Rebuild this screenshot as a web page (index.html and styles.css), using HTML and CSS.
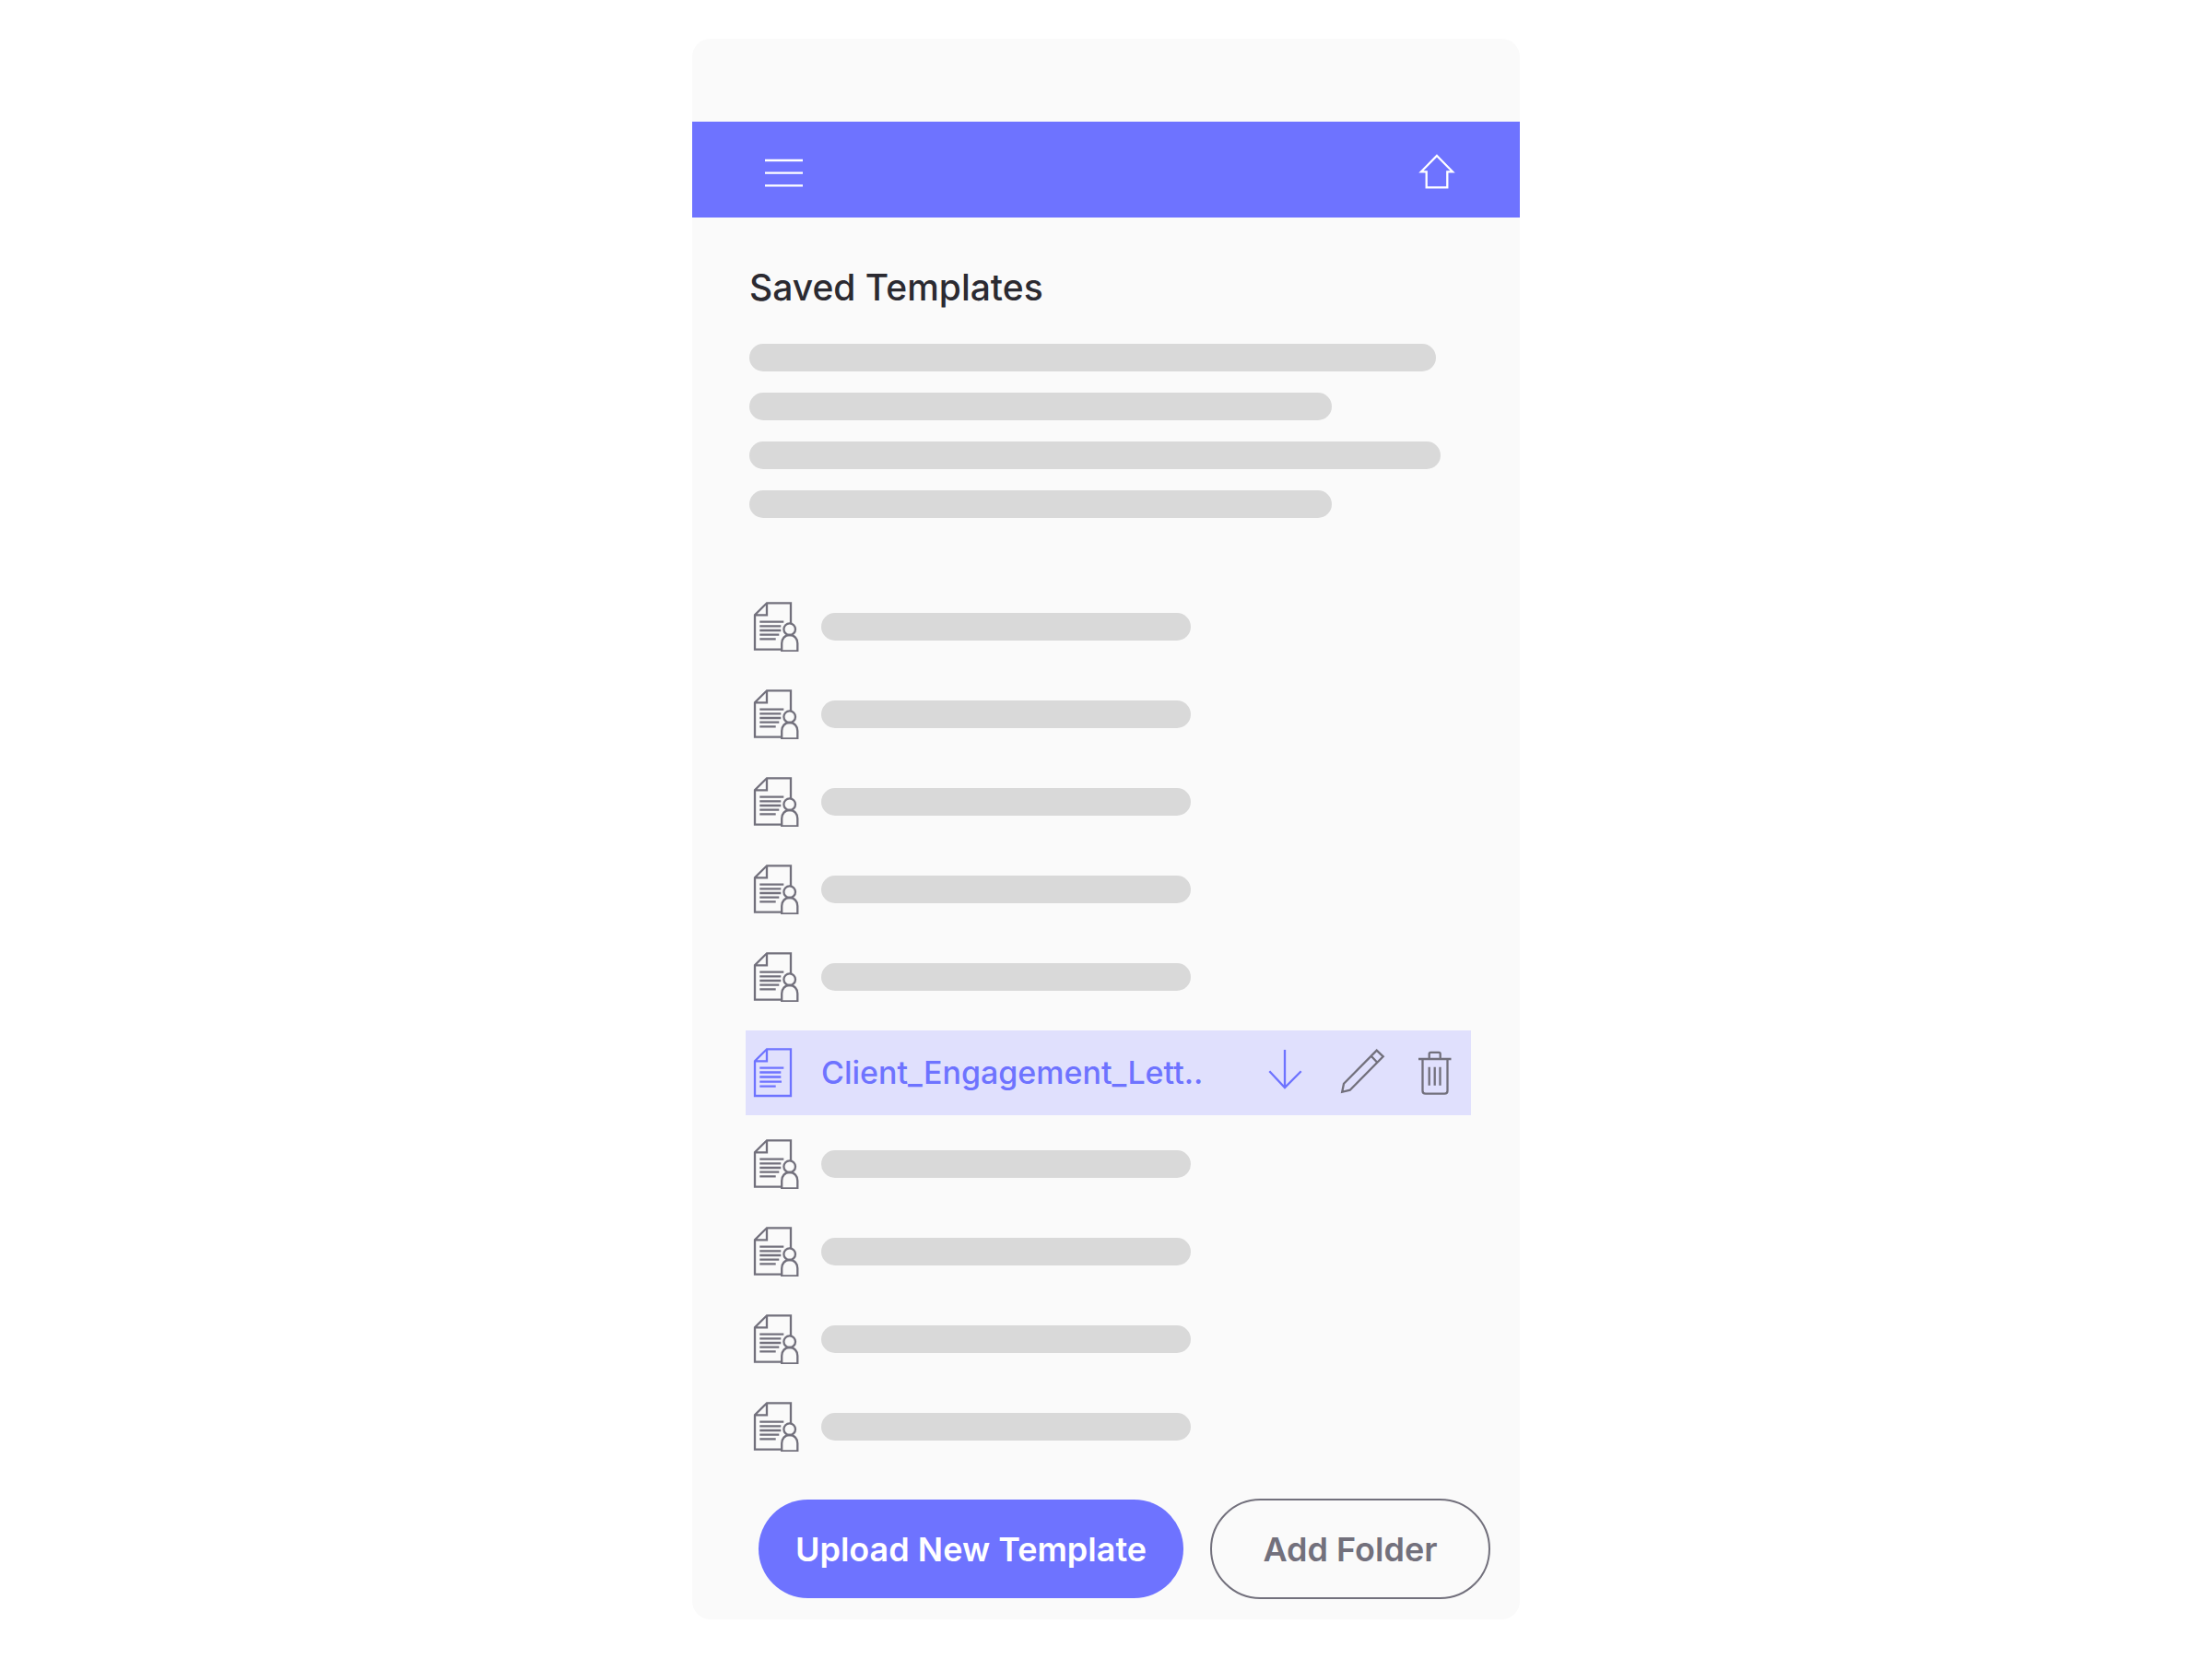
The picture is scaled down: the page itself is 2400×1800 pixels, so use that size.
FILE: index.html
```html
<!DOCTYPE html>
<html lang="en">
<head>
<meta charset="utf-8">
<meta name="viewport" content="width=device-width, initial-scale=1">
<title>Saved Templates</title>
<link rel="stylesheet" href="styles.css">
</head>
<body>
<svg class="sprite" aria-hidden="true">
  <symbol id="shared-doc" viewBox="0 0 50 54">
    <path d="M31 51.7H2V14.3L15 1.3H41V23M15 1.3V14.3H2"/>
    <path d="M7.3 21.7H33.3M7.3 26.3H30.3M7.3 31H30.3M7.3 35.7H28.3M7.3 40.3H24.7"/>
    <circle cx="39.7" cy="29.7" r="6.3"/>
    <path d="M31.2 53.3V45C31.2 40 34.5 36 39.7 36S48.3 40 48.3 45V53.3Z"/>
  </symbol>
</svg>
<main class="screen">
  <header class="topbar">
    <button class="icon-button" type="button" aria-label="Menu">
      <svg width="41" height="34" viewBox="0 0 41 34"><path d="M0 5H41M0 18.7H41M0 32.3H41"/></svg>
    </button>
    <a class="icon-button" href="#" aria-label="Home">
      <svg width="38" height="38" viewBox="0 0 38 38"><path d="M19 2L36 19.3H30.3V36.3H7.7V19.3H2Z"/></svg>
    </a>
  </header>
  <div class="content">
    <h1 class="title">Saved Templates</h1>
    <div class="intro">
      <span class="bar bar-long"></span>
      <span class="bar bar-short"></span>
      <span class="bar bar-longest"></span>
      <span class="bar bar-short"></span>
    </div>
    <ul class="files">
      <li class="file"><svg class="doc"><use href="#shared-doc"/></svg><span class="bar bar-name"></span></li>
      <li class="file"><svg class="doc"><use href="#shared-doc"/></svg><span class="bar bar-name"></span></li>
      <li class="file"><svg class="doc"><use href="#shared-doc"/></svg><span class="bar bar-name"></span></li>
      <li class="file"><svg class="doc"><use href="#shared-doc"/></svg><span class="bar bar-name"></span></li>
      <li class="file"><svg class="doc"><use href="#shared-doc"/></svg><span class="bar bar-name"></span></li>
      <li class="file file-selected">
        <svg class="doc doc-selected" viewBox="0 0 50 54">
          <path d="M2 14.3L15 1.3H41V52H2ZM15 1.3V14.3H2"/>
          <path d="M7.3 21.7H33.3M7.3 26.5H30.3M7.3 31.5H30.3M7.3 36.7H31M7.3 41.7H24.7"/>
        </svg>
        <span class="file-name">Client_Engagement_Lett..</span>
        <div class="actions">
          <button class="icon-button action-download" type="button" aria-label="Download">
            <svg width="44" height="48" viewBox="0 0 44 48"><path d="M18 -1V40M1.3 22.2L18 40L35.7 22.2"/></svg>
          </button>
          <button class="icon-button" type="button" aria-label="Edit">
            <svg width="48" height="48" viewBox="0 2 48 48"><path d="M1.2 46.8L3 37.7L38.7 1.7L45.7 8.3L9.7 44.7ZM32.7 7.7L39.3 14.7"/></svg>
          </button>
          <button class="icon-button" type="button" aria-label="Delete">
            <svg width="38" height="48" viewBox="0 0 38 48"><path d="M1 9H36.5M12.7 9V3.5Q12.7 1.8 14.4 1.8H23Q24.7 1.8 24.7 3.5V9M5.5 9V43.5Q5.5 46.7 8.7 46.7H29.3Q32.5 46.7 32.5 43.5V9M12.7 17.7V37.7M18.7 17.7V37.7M24.5 17.7V37.7"/></svg>
          </button>
        </div>
      </li>
      <li class="file"><svg class="doc"><use href="#shared-doc"/></svg><span class="bar bar-name"></span></li>
      <li class="file"><svg class="doc"><use href="#shared-doc"/></svg><span class="bar bar-name"></span></li>
      <li class="file"><svg class="doc"><use href="#shared-doc"/></svg><span class="bar bar-name"></span></li>
      <li class="file"><svg class="doc"><use href="#shared-doc"/></svg><span class="bar bar-name"></span></li>
    </ul>
  </div>
  <footer class="footer">
    <button class="button button-primary" type="button">Upload New Template</button>
    <button class="button button-outline" type="button">Add Folder</button>
  </footer>
</main>
</body>
</html>
```

FILE: styles.css
```css
:root {
  --accent: #6e73ff;
  --accent-soft: #e0e0fd;
  --surface: #fafafa;
  --placeholder: #d9d9d9;
  --muted: #72707c;
  --text: #2b2a31;
}

* { box-sizing: border-box; }

body {
  margin: 0;
  padding: 42px 0;
  background: #fff;
  color: var(--text);
  font-family: Inter, "Liberation Sans", sans-serif;
}

svg {
  display: block;
  flex: none;
  fill: none;
  stroke: currentColor;
  stroke-width: 2.3;
  overflow: visible;
}

.sprite { position: absolute; width: 0; height: 0; }

.screen {
  width: 100%;
  max-width: 898px;
  margin: 0 auto;
  padding: 90px 0 22px;
  border-radius: 20px;
  background: var(--surface);
}

.topbar {
  display: flex;
  align-items: center;
  justify-content: space-between;
  height: 104px;
  padding: 4px 71px 0 79px;
  background: var(--accent);
  color: #fff;
}

.icon-button {
  padding: 0;
  border: 0;
  background: none;
  color: inherit;
  cursor: pointer;
}

.content { padding: 52px 53px 0 62px; }

.title {
  margin: 0 0 37px;
  font-size: 39px;
  line-height: 48px;
  font-weight: 500;
}

.intro { display: grid; gap: 23px; }

.bar {
  display: block;
  height: 30px;
  max-width: 100%;
  border-radius: 15px;
  background: var(--placeholder);
}
.bar-long { width: 745px; }
.bar-longest { width: 750px; }
.bar-short { width: 632px; }
.bar-name { width: 401px; }

.files {
  display: grid;
  gap: 41px;
  margin: 91px 0 0;
  padding: 0;
  list-style: none;
}

.file {
  display: flex;
  align-items: center;
  gap: 24px;
  height: 54px;
  padding-left: 4px;
  color: var(--muted);
}

.doc { width: 50px; height: 54px; }
.doc-selected { color: var(--accent); }

.file-selected {
  height: 92px;
  margin: -10px 0 -15px -4px;
  padding: 0 20px 0 8px;
  background: var(--accent-soft);
}

.file-name {
  color: var(--accent);
  font-size: 34px;
  line-height: 44px;
  font-weight: 500;
}

.actions { display: flex; gap: 35px; margin-left: auto; }
.action-download { color: var(--accent); }

.footer {
  display: flex;
  align-items: center;
  justify-content: space-between;
  flex-wrap: wrap;
  gap: 28px;
  padding: 51px 32px 0 72px;
}

.button {
  height: 107px;
  border: 0;
  border-radius: 55px;
  font: 600 36px/46px Inter, "Liberation Sans", sans-serif;
  cursor: pointer;
}
.button-primary {
  width: 461px;
  background: var(--accent);
  color: #fff;
}
.button-outline {
  width: 304px;
  height: 109px;
  border: 2px solid var(--muted);
  background: none;
  color: var(--muted);
}
```
